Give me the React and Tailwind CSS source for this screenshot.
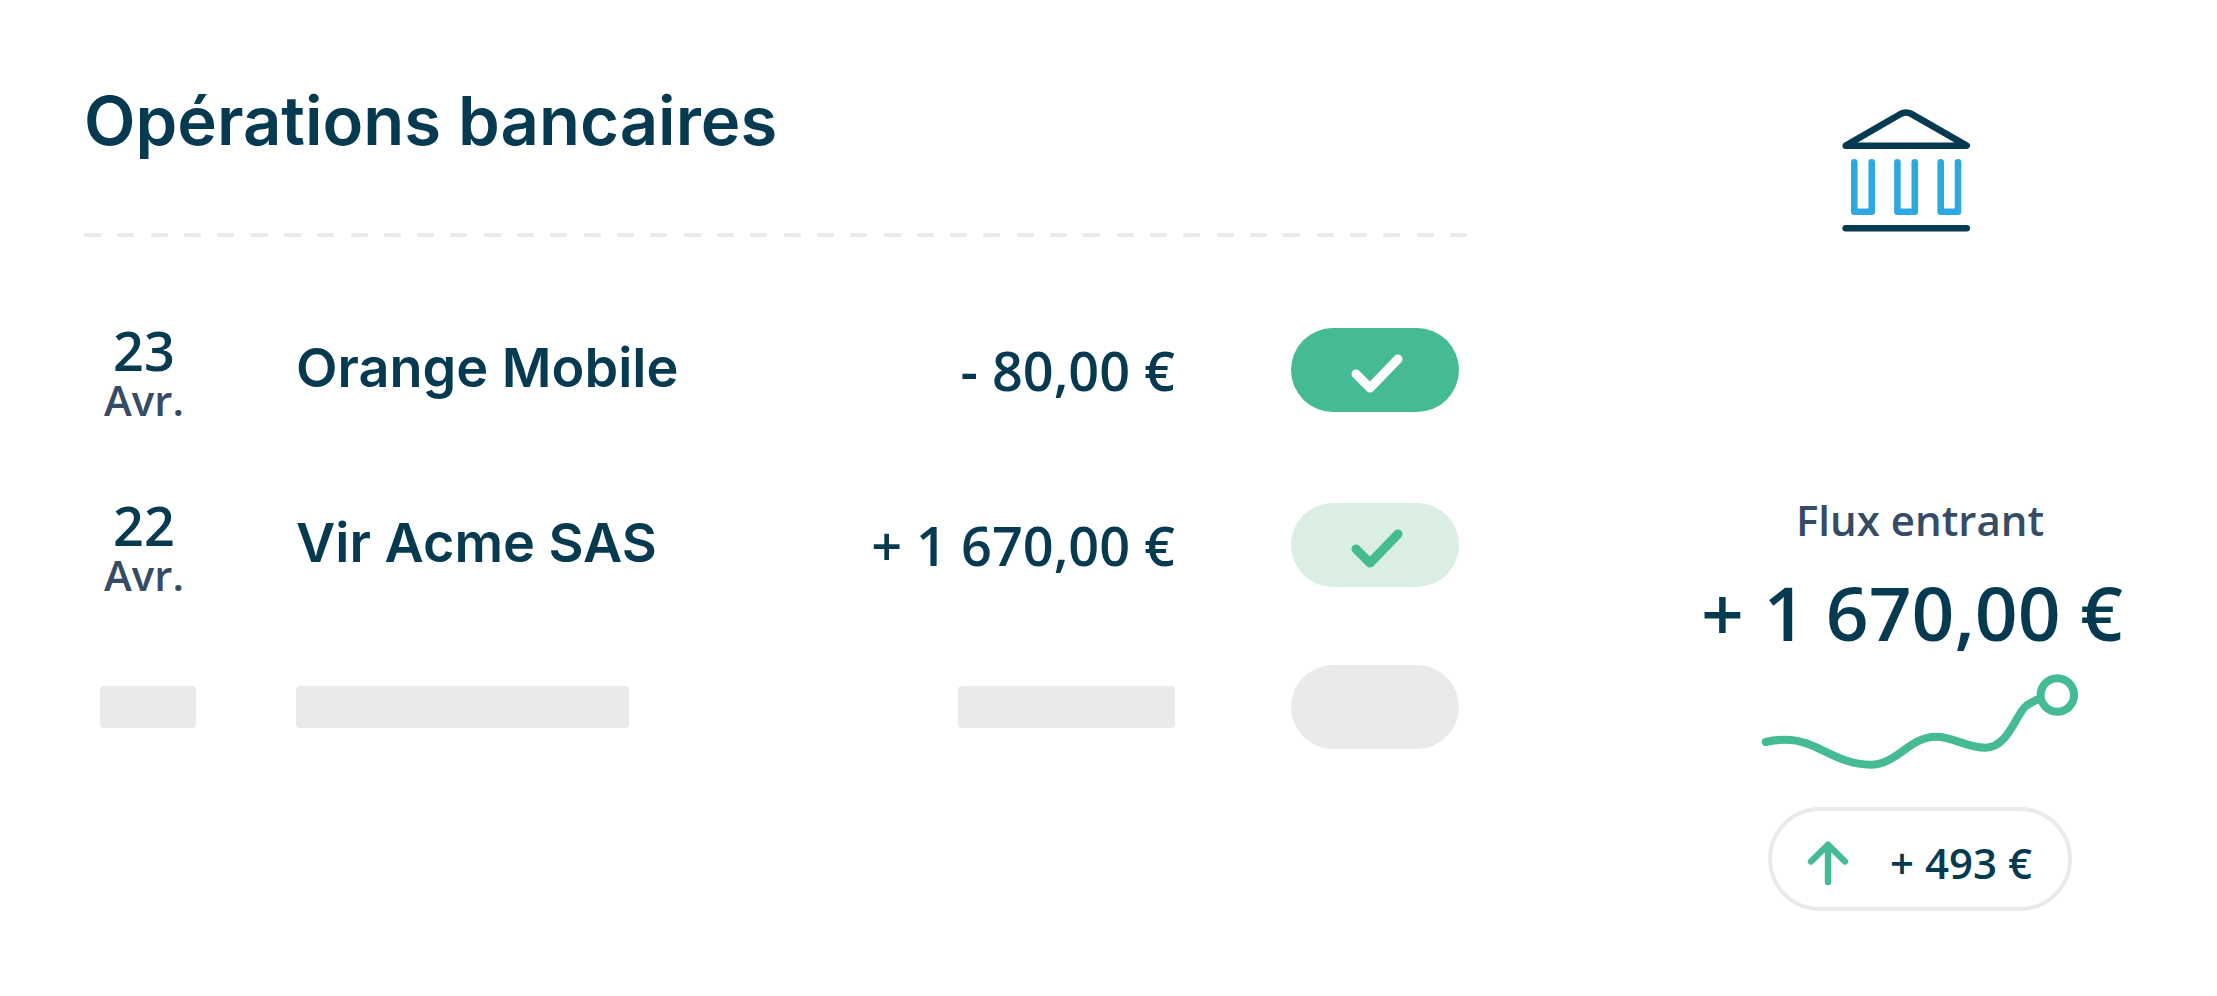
const operations = [
  { day: '23', month: 'Avr.', label: 'Orange Mobile', amount: '- 80,00 €', pill: 'bg-[#44bb90] text-white' },
  { day: '22', month: 'Avr.', label: 'Vir Acme SAS', amount: '+ 1 670,00 €', pill: 'bg-[#daeee3] text-[#44bb90]' }
]

function DashedLine() {
  return (
    <div className="flex justify-between" aria-hidden="true">
      {Array.from({ length: 42 }, (_, i) => (
        <span key={i} className="h-1 w-[17px] rounded-[1px] bg-[#e9eaec]" />
      ))}
    </div>
  )
}

function CheckPill({ className }) {
  return (
    <span role="img" aria-label="Rapprochée" className={`inline-block h-[84px] w-[168px] rounded-full align-middle ${className}`}>
      <svg viewBox="0 0 168 84" className="size-full" fill="none" stroke="currentColor" strokeWidth="9" strokeLinecap="round" strokeLinejoin="round">
        <path d="M65 46L79 60L107 31" />
      </svg>
    </span>
  )
}

function BankIcon() {
  return (
    <svg viewBox="0 0 132 128" className="h-32 w-[132px]" fill="none" strokeWidth="6.6" strokeLinecap="round" strokeLinejoin="round" aria-hidden="true">
      <g stroke="#063a50">
        <path d="M5.7 38.7L60.5 7Q66 4 71.5 7L126.7 38.7Z" />
        <path d="M5.7 121.3H126.7" />
      </g>
      <g stroke="#2da9e1">
        <path d="M14.3 55.3V104.7H31.7V55.3" />
        <path d="M57.4 55.3V104.7H74.8V55.3" />
        <path d="M100.7 55.3V104.7H118V55.3" />
      </g>
    </svg>
  )
}

function TrendLine() {
  return (
    <svg viewBox="0 0 322 100" className="h-[100px] w-[322px]" fill="none" stroke="#44bb90" strokeWidth="8" strokeLinecap="round" aria-hidden="true">
      <path d="M6.7 71C13 69.5 20 68.7 26.7 68.7C58 68.7 76 93.7 111.7 93.7C138 93.7 150 65.7 177.3 65.7C194 65.7 207 76.7 226.7 76.7C248 76.7 256 46 266 36C270 32 275 30 281 27.5" />
      <circle cx="298.3" cy="24" r="16.7" />
    </svg>
  )
}

function ArrowUp() {
  return (
    <svg viewBox="0 0 44 48" className="h-12 w-11" fill="none" stroke="#44bb90" strokeWidth="6.4" strokeLinecap="round" strokeLinejoin="round" aria-hidden="true">
      <path d="M22 43V6M5 22.5L22 5.7L39 22.5" />
    </svg>
  )
}

function App() {
  return (
    <main className="flex gap-[156px] bg-white pl-[84px] font-['Open_Sans',sans-serif] font-semibold text-[#063a50]">
      <section className="min-w-0 flex-1 pt-[81px]">
        <h1 className="mb-[72px] font-['Inter',sans-serif] text-[67px] leading-[80px] font-semibold">Opérations bancaires</h1>
        <DashedLine />
        <table className="mt-[45px] w-full table-fixed">
          <colgroup>
            <col className="w-[212px]" />
            <col />
            <col className="w-[340px]" />
            <col className="w-[292px]" />
          </colgroup>
          <tbody>
            {operations.map(op => (
              <tr key={op.label} className="h-[175px]">
                <td className="pt-2">
                  <div className="w-[120px] text-center">
                    <div className="text-[54px] leading-[52px]">{op.day}</div>
                    <div className="text-[42px] leading-[48px] text-[#364c66]">{op.month}</div>
                  </div>
                </td>
                <td className="pb-1 font-['Inter',sans-serif] text-[54px] leading-[64px]">{op.label}</td>
                <td className="text-right text-[54px] leading-[64px] whitespace-nowrap">{op.amount}</td>
                <td className="pr-2 text-right">
                  <CheckPill className={op.pill} />
                </td>
              </tr>
            ))}
            <tr className="h-[149px]" aria-hidden="true">
              <td><div className="ml-4 h-[42px] w-24 rounded-sm bg-[#e9eaec]" /></td>
              <td><div className="h-[42px] w-[333px] rounded-sm bg-[#e9eaec]" /></td>
              <td><div className="ml-auto h-[42px] w-[217px] rounded-sm bg-[#e9eaec]" /></td>
              <td><div className="mr-2 ml-auto h-[84px] w-[168px] rounded-full bg-[#e9eaec]" /></td>
            </tr>
          </tbody>
        </table>
      </section>

      <aside className="flex w-[594px] shrink-0 flex-col items-center pt-[107px]">
        <div className="pr-7">
          <BankIcon />
        </div>
        <h2 className="mt-[257px] text-[42px] leading-[56px] text-[#364c66]">Flux entrant</h2>
        <p className="mt-5 pr-4 text-[75px] leading-[88px] whitespace-nowrap">+ 1 670,00 €</p>
        <div className="mt-[15px]">
          <TrendLine />
        </div>
        <div className="mt-9 flex h-[104px] items-center gap-10 rounded-full border-4 border-[#e9eaec] pt-2 pr-9 pl-[34px]">
          <ArrowUp />
          <span className="text-[42px] leading-[56px] whitespace-nowrap">+ 493 €</span>
        </div>
      </aside>
    </main>
  )
}

export default App
